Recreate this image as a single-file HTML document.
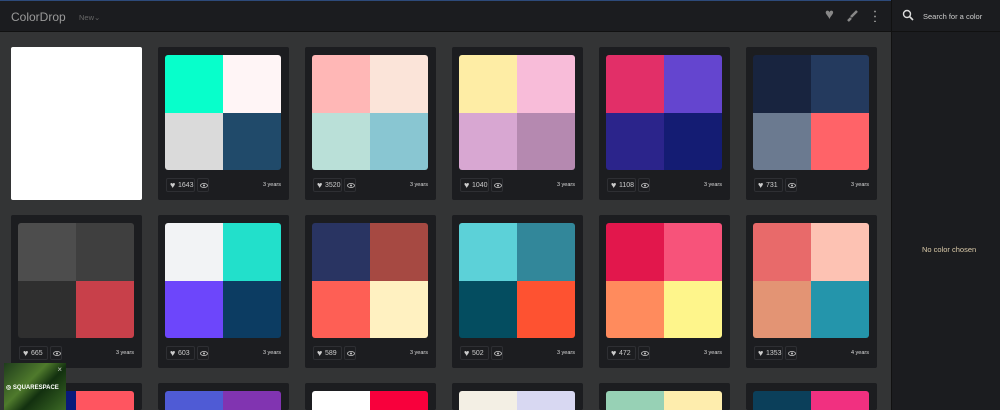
<!DOCTYPE html><html><head><style>
*{margin:0;padding:0;box-sizing:border-box}
html,body{width:1000px;height:410px;overflow:hidden;background:#333435}
body{font-family:"Liberation Sans",sans-serif;position:relative}
.hdr{position:absolute;left:0;top:0;width:1000px;height:32px;background:#1b1c1f;border-top:1px solid #2d4a7a;border-bottom:1px solid #111}
.side{position:absolute;left:891px;top:0;width:109px;height:410px;background:#1b1c1f;border-left:1px solid #111}
.card{position:absolute;width:131px;height:153px;background:#1c1d20;border-radius:2px;overflow:hidden}
.sw{position:absolute;left:7px;top:8px;width:116px;height:115px;border-radius:3px;overflow:hidden;display:grid;grid-template-columns:58px 58px;grid-template-rows:58px 57px}
.ft{position:absolute;left:8px;top:131px;right:8px;height:14px;font-size:7px;color:#ccc}
.lk{position:absolute;left:0;top:0;height:14px;width:29px;border:1px solid #2e2f33;border-radius:2px;padding-left:11px;line-height:13px}
.lk:before{content:"♥";position:absolute;left:3px;top:0;font-size:9px;color:#ccc}
.ey{position:absolute;left:31px;top:0;height:14px;width:12px;border:1px solid #2e2f33;border-radius:2px}
.ey svg{position:absolute;left:2px;top:4px}
.yr{position:absolute;right:0;top:4px;font-size:5.5px;color:#ddd}
</style></head><body>
<div class="hdr">
<div style="position:absolute;left:11px;top:9px;color:#9a9a9a;font-size:12px">ColorDrop</div>
<div style="position:absolute;left:79px;top:12px;color:#666;font-size:7.5px">New⌄</div>
<div style="position:absolute;left:825px;top:5px;color:#888;font-size:15px">♥</div>
<svg style="position:absolute;left:846px;top:9px" width="12" height="12"><path d="M11 1L5 7M2 11L5 8" stroke="#888" stroke-width="2.5"/></svg>
<div style="position:absolute;left:874px;top:8px;width:2px;height:13px;background:radial-gradient(circle,#888 1px,transparent 1px) 0 0/2px 5px"></div>
</div>
<div class="side">
<svg style="position:absolute;left:10px;top:9px" width="12" height="12"><circle cx="5" cy="5" r="3.5" stroke="#ddd" stroke-width="1.4" fill="none"/><path d="M7.5 7.5L11 11" stroke="#ddd" stroke-width="1.6"/></svg>
<div style="position:absolute;left:31px;top:12px;color:#ccc;font-size:7.5px">Search for a color</div>
<div style="position:absolute;left:0;top:31px;width:109px;height:1px;background:#111"></div>
<div style="position:absolute;left:30px;top:245px;color:#d9c9a8;font-size:7.5px">No color chosen</div>
</div>
<div style="position:absolute;left:11px;top:47px;width:131px;height:153px;background:#fff;border-radius:2px"></div>
<div id="g"></div>
<div style="position:absolute;left:4px;top:363px;width:62px;height:47px;background:linear-gradient(135deg,#1f3d1c,#4f7a2c 40%,#12300f 60%,#3d6a25);color:#fff;font-size:6px;padding-top:21px;padding-left:2px;font-weight:bold">◎ SQUARESPACE<span style="position:absolute;right:4px;top:2px;color:#ccc;font-weight:normal;font-size:8px">×</span></div>
<script>
var X=[11,158,305,452,599,746],Y=[47,215,383];
var d=[[null,["#07ffcb","#fff5f6","#dadada","#204a6a",1643,"3 years"],["#ffb7b6","#fbe4d9","#bae0d8","#89c6d2",3520,"3 years"],["#feeda5","#f8bcd9","#d8a7d2","#b589b0",1040,"3 years"],["#e22f68","#6445cf","#2b248b","#141c73",1108,"3 years"],["#18243f","#243a5e","#6b7a90","#ff6368",731,"3 years"]],
[["#4d4d4d","#3f3f3f","#2f2f2f","#c8404a",665,"3 years"],["#f2f3f5","#22e0cb","#6d46fb","#0c3c62",603,"3 years"],["#293462","#a64942","#fe5f55","#fff1c1",589,"3 years"],["#5cd1d8","#32879a","#044d60","#fe5231",502,"3 years"],["#e2174c","#f7537a","#ff8b5d","#fef58b",472,"3 years"],["#e86a6a","#fdc2b3","#e39474","#2495ab",1353,"4 years"]],
[["#0a1a7a","#ff5560","",""],["#4f5bd5","#8134b1","",""],["#ffffff","#f8003c","",""],["#f3efe4","#d8d8f2","",""],["#97d1b5","#feedad","",""],["#0b3f5a","#f13080","",""]]];
var eye='<svg width="8" height="5"><ellipse cx="4" cy="2.5" rx="3.5" ry="2" stroke="#ccc" fill="none" stroke-width="0.8"/><circle cx="4" cy="2.5" r="1" fill="#ccc"/></svg>';
var h="";
for(var r=0;r<3;r++)for(var c=0;c<6;c++){var e=d[r][c];if(!e)continue;
h+='<div class="card" style="left:'+X[c]+'px;top:'+Y[r]+'px;height:'+(r==2?27:153)+'px"><div class="sw">';
for(var i=0;i<4;i++)h+='<div style="background:'+(e[i]||"#1c1d20")+'"></div>';
h+='</div>';if(e[4])h+='<div class="ft"><div class="lk">'+e[4]+'</div><div class="ey">'+eye+'</div><div class="yr">'+e[5]+'</div></div>';h+='</div>';}
document.getElementById("g").innerHTML=h;
</script>
</body></html>
